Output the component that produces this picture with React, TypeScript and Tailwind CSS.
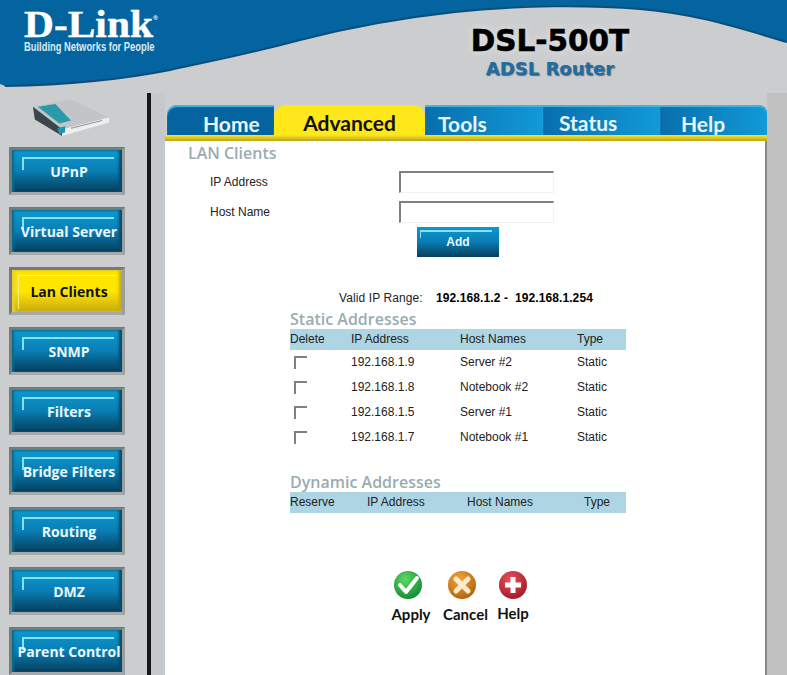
import React from "react";

const sans = "font-['Liberation_Sans',Arial,sans-serif]";
const side = ["UPnP", "Virtual Server", "Lan Clients", "SNMP", "Filters", "Bridge Filters", "Routing", "DMZ", "Parent Control"];
const rows = [
  ["192.168.1.9", "Server #2"],
  ["192.168.1.8", "Notebook #2"],
  ["192.168.1.5", "Server #1"],
  ["192.168.1.7", "Notebook #1"],
];

function SideButton({ label }: { label: string }) {
  const active = label === "Lan Clients";
  return (
    <div className={`h-[48px] w-[116px] border-[3px] border-[#747b7b] border-b-[#a5a9aa] border-r-[#9a9e9f] ${active ? "bg-gradient-to-b from-[#ffe600] via-[#ffe600] to-[#c9aa10] shadow-[inset_3px_0_3px_#e8d030,inset_-3px_0_3px_#c4a818]" : "bg-gradient-to-b from-[#0a9bd0] via-[#0a7db5] to-[#053f5c] shadow-[inset_2px_0_2px_#0a6a8a,inset_-3px_0_3px_#064a68]"} relative flex items-center justify-center`}>
      {active ? (
        <div className="absolute left-[6px] top-[5px] h-[34px] w-[98px] border-l border-t border-[#fff27a]" />
      ) : (
        <div className="absolute left-[10px] top-[7px] h-[13px] w-[92px] border-l-2 border-t-2 border-[#86e2f3]" />
      )}
      <span className={`relative ml-[4px] mt-[1px] whitespace-nowrap font-['Open_Sans',sans-serif] text-[14px] font-bold leading-[20px] ${active ? "text-[#111]" : "text-[#e8f8fc]"}`}>{label}</span>
    </div>
  );
}

function Tab({ label, cls, active }: { label: string; cls: string; active?: boolean }) {
  return (
    <div className={`${cls} ${active ? "rounded-t-[12px] text-[#111]" : "text-[#e6f7fc] shadow-[inset_0_2px_1px_#45b5de]"} flex h-[30px] font-['Lato',sans-serif] text-[21px] font-bold leading-[22px]`}>
      {label}
    </div>
  );
}

function Round({ color, dark, children }: { color: string; dark: string; children: React.ReactNode }) {
  return (
    <svg width="30" height="30" viewBox="0 0 30 30">
      <defs>
        <radialGradient id={`g${color.slice(1)}`} cx="40%" cy="30%" r="75%">
          <stop offset="0" stopColor={color} />
          <stop offset="1" stopColor={dark} />
        </radialGradient>
      </defs>
      <circle cx="15" cy="15" r="14" fill={`url(#g${color.slice(1)})`} />
      {children}
    </svg>
  );
}

export default function App() {
  return (
    <div className={`${sans} relative h-[675px] w-[787px] overflow-hidden bg-[#cbcdcf]`}>
      {/* header */}
      <div className="relative h-[93px]">
        <svg className="absolute inset-0" width="787" height="93" viewBox="0 0 787 93">
          <path d="M0 0H787V42C745 30 700 14 640 9C590 5 520 5 455 12C400 18 350 27 300 40C240 56 205 62 170 70C120 80 60 85 5 86L0 84Z" fill="#04649f" />
          <path d="M787 42C745 30 700 14 640 9C590 5 520 5 455 12C400 18 350 27 300 40C240 56 205 62 170 70C120 80 60 85 5 86" fill="none" stroke="#0a4f7c" strokeWidth="2" />
        </svg>
        <div className="relative ml-[24px] w-[140px] pt-[10px]">
          <div className="flex h-[30px] origin-left scale-x-[1.12] items-start whitespace-nowrap font-['Liberation_Serif',serif] text-[37px] font-bold leading-[30px] text-white [-webkit-text-stroke:0.4px_white]">
            D-Link<span className="mt-[4px] font-['Liberation_Sans',sans-serif] text-[6px] leading-[8px] [-webkit-text-stroke:0]">®</span>
          </div>
          <div className="mt-[0px] origin-left scale-x-[0.72] whitespace-nowrap text-[13px] font-bold leading-[14px] text-[#dcebf3]">Building Networks for People</div>
        </div>
        <div className="absolute left-[470px] top-[23px] flex w-[160px] flex-col items-center">
          <div className="whitespace-nowrap font-['DejaVu_Sans',sans-serif] text-[29.5px] font-bold leading-[36px] text-black [-webkit-text-stroke:0.6px_black] [text-shadow:0_0_8px_#e6e8ea]">DSL-500T</div>
          <div className="font-['DejaVu_Sans',sans-serif] text-[18px] font-bold leading-[20px] text-[#1f6ea3] [text-shadow:1px_1px_1px_#5a6a75]">ADSL Router</div>
        </div>
      </div>

      <div className="flex h-[582px]">
        {/* sidebar */}
        <div className="flex w-[147px] flex-col pl-[9px]">
          <svg className="ml-[20px] mt-[6px]" width="84" height="42" viewBox="0 0 84 42">
            <path d="M3 8L41 0L81 19L33 31Z" fill="#c2c5c7" />
            <path d="M3 8L33 31V38L5 21Z" fill="#3c4549" />
            <path d="M33 31L81 19V24L33 38Z" fill="#eceef0" />
            <path d="M8 8L26 5L42 22L30 25Z" fill="#2a9aa8" />
            <path d="M28 30L36 28V34L30 36Z" fill="#2094ad" />
            <path d="M42 30L74 22" stroke="#8a8f93" strokeWidth="1" />
          </svg>
          <div className="mt-[7px] flex flex-col gap-[12px]">
            {side.map((s) => <SideButton key={s} label={s} />)}
          </div>
        </div>
        <div className="w-[4px] bg-[#16181a]" />
        <div className="w-[14px] bg-[#c6c9cb]" />

        {/* main */}
        <div className="flex w-[602px] flex-col pt-[12px]">
          <div className="ml-[2px] flex h-[30px] w-[600px]">
            <Tab label="Home" cls="w-[107px] rounded-tl-[10px] bg-[#05649f] pl-[36px] pt-[8px]" />
            <Tab label="Advanced" cls="w-[151px] justify-center bg-[#ffe81a] pt-[7px]" active />
            <Tab label="Tools" cls="w-[118px] bg-gradient-to-r from-[#0a6ead] to-[#129ad8] pl-[13px] pt-[8px]" />
            <Tab label="Status" cls="w-[117px] bg-gradient-to-r from-[#0a6ead] to-[#129ad8] pl-[16px] pt-[7px]" />
            <Tab label="Help" cls="w-[107px] rounded-tr-[8px] bg-gradient-to-r from-[#0a6ead] to-[#129ad8] pl-[21px] pt-[8px]" />
          </div>
          <div className="h-[6px] w-[602px] bg-gradient-to-b from-[#ffe81a] to-[#b9a31c]" />
          <div className="flex flex-1 flex-col border-r-2 border-[#8a8a8a] bg-white text-[12px] text-[#222]">
            <div className="ml-[23px] mt-[2px] font-['Open_Sans',sans-serif] text-[16px] font-semibold leading-[20px] text-[#9aacb0]">LAN Clients</div>
            <div className="ml-[45px] mt-[8px] flex h-[22px] items-center">
              <span className="w-[189px]">IP Address</span>
              <input className="h-[22px] w-[155px] border-2 border-b border-r border-[#808080] border-b-[#f2f2f2] border-r-[#f2f2f2] bg-white" />
            </div>
            <div className="ml-[45px] mt-[8px] flex h-[22px] items-center">
              <span className="w-[189px]">Host Name</span>
              <input className="h-[22px] w-[155px] border-2 border-b border-r border-[#808080] border-b-[#f2f2f2] border-r-[#f2f2f2] bg-white" />
            </div>
            <div className="relative ml-[252px] mt-[4px] flex h-[30px] w-[82px] items-center justify-center bg-gradient-to-b from-[#0a9bd0] via-[#0a7db5] to-[#053f5c] font-bold text-[#e8f8fc]">
              <div className="absolute left-[3px] top-[3px] h-[8px] w-[72px] border-l border-t-2 border-[#86e2f3]" />
              <span className="relative">Add</span>
            </div>

            <div className="ml-[174px] mt-[33px] flex h-[16px] items-center">
              <span className="w-[97px] tracking-[0.1px]">Valid IP Range:</span>
              <b className="tracking-[0.1px] text-black">192.168.1.2 -&nbsp; 192.168.1.254</b>
            </div>
            <div className="ml-[125px] mt-[3px] font-['Open_Sans',sans-serif] text-[16px] font-semibold leading-[20px] text-[#9aacb0]">Static Addresses</div>
            <div className="ml-[125px] grid h-[21px] w-[336px] grid-cols-[61px_109px_117px_49px] items-center bg-[#add5e3] pb-[1px]">
              <span>Delete</span><span>IP Address</span><span>Host Names</span><span>Type</span>
            </div>
            {rows.map(([ip, host]) => (
              <div key={ip} className="ml-[125px] grid h-[25px] w-[336px] grid-cols-[61px_109px_117px_49px] items-center">
                <div className="pl-[4px]">
                  <input type="checkbox" className="block h-[13px] w-[13px] appearance-none border-2 border-b-0 border-r-0 border-[#808080]" />
                </div>
                <span className="pb-[1px]">{ip}</span><span className="pb-[1px]">{host}</span><span className="pb-[1px]">Static</span>
              </div>
            ))}
            <div className="ml-[125px] mt-[22px] font-['Open_Sans',sans-serif] text-[16px] font-semibold leading-[20px] text-[#9aacb0]">Dynamic Addresses</div>
            <div className="ml-[125px] grid h-[21px] w-[336px] grid-cols-[77px_100px_117px_42px] items-center bg-[#add5e3] pb-[1px]">
              <span>Reserve</span><span>IP Address</span><span>Host Names</span><span>Type</span>
            </div>

            <div className="ml-[216px] mt-[57px] flex items-start font-['Lato',sans-serif] text-[15px] font-bold text-[#111]">
              <div className="flex w-[54px] flex-col items-center">
                <Round color="#5fd86a" dark="#0c8a2c">
                  <path d="M7 15L13 22L24 8" fill="none" stroke="#fff" strokeWidth="4" strokeLinecap="round" strokeLinejoin="round" />
                </Round>
                <span className="ml-[6px] mt-[6px] leading-[16px]">Apply</span>
              </div>
              <div className="flex w-[54px] flex-col items-center">
                <Round color="#f5a63a" dark="#b0600c">
                  <path d="M9 9L21 21M21 9L9 21" fill="none" stroke="#ffe9cf" strokeWidth="5" strokeLinecap="round" />
                </Round>
                <span className="ml-[7px] mt-[6px] leading-[16px]">Cancel</span>
              </div>
              <div className="flex w-[48px] flex-col items-center">
                <Round color="#e8505a" dark="#a01828">
                  <path d="M15 7V23M7 15H23" fill="none" stroke="#fff" strokeWidth="5" />
                </Round>
                <span className="mt-[5px] leading-[16px]">Help</span>
              </div>
            </div>
          </div>
        </div>
        <div className="flex-1 bg-[#c0c0c0]" />
      </div>
    </div>
  );
}
